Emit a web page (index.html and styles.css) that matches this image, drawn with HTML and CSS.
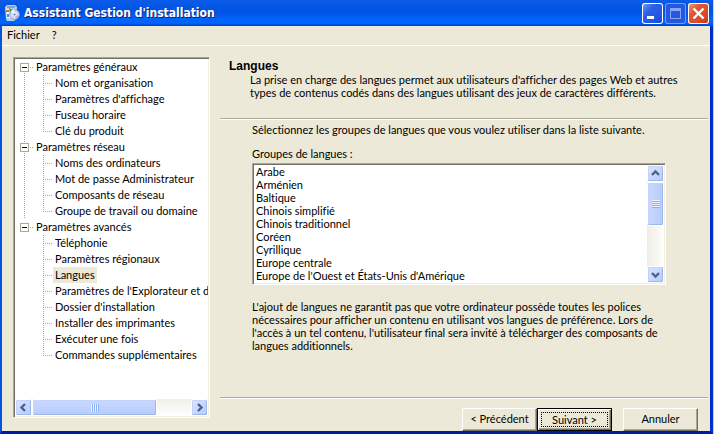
FILE: index.html
```html
<!DOCTYPE html>
<html lang="fr">
<head>
  <meta charset="UTF-8">
  <meta name="viewport" content="width=device-width, initial-scale=1.0">
  <title>Assistant Gestion d'installation</title>
  <link rel="stylesheet" href="styles.css">
</head>
<body>
  <div class="window">
    <header class="titlebar">
      <svg class="app-icon" width="16" height="16" viewBox="0 0 16 16" aria-hidden="true">
        <path d="M1 2l2-2h8l2 2-1 12-2 2H3l-1-2z" fill="#b9d0e6"/>
        <path d="M2 4h10v9H3z" fill="#eef6fb"/>
        <path d="M3 1h8v2H3z" fill="#7fa6d0"/>
        <path d="M5 3l4 2-3 4z" fill="#2c9a55"/>
        <path d="M2 5h3v2H2z" fill="#e0642f"/>
        <path d="M3 9h2v3H3z" fill="#4f8fd8"/>
        <circle cx="10.500" cy="9.500" r="4.800" fill="#d7d9ee" stroke="#8d9cc4"/>
        <path d="M10.500 9.500L7 6l3-1.500z" fill="#fff"/>
        <path d="M10.500 9.500l4 2-2 2.500z" fill="#b7a9dc"/>
        <circle cx="10.500" cy="9.500" r="1.500" fill="#5478c0" stroke="#fff"/>
      </svg>
      <h1>Assistant Gestion d'installation</h1>
      <button class="caption" aria-label="Réduire">
        <svg width="21" height="21" viewBox="0 0 21 21"><path d="M5 13h7v3H5z" fill="#fff"/></svg>
      </button>
      <button class="caption maximize" aria-label="Agrandir" disabled>
        <svg width="21" height="21" viewBox="0 0 21 21"><path d="M5 5h11v11H5zM6 8v7h9V8z" fill="#87a5f5" fill-rule="evenodd"/></svg>
      </button>
      <button class="caption close" aria-label="Fermer">
        <svg width="21" height="21" viewBox="0 0 21 21"><path d="M5.500 5.500l10 10M15.500 5.500l-10 10" stroke="#fff" stroke-width="2.400"/></svg>
      </button>
    </header>

    <nav class="menubar">
      <button>Fichier</button>
      <button>?</button>
    </nav>

    <main class="client">
      <div class="tree-box">
        <ul class="tree">
          <li>
            <div class="group"><button class="toggle" aria-label="Réduire Paramètres généraux"></button><span>Paramètres généraux</span></div>
            <ul>
              <li><a href="#">Nom et organisation</a></li>
              <li><a href="#">Paramètres d'affichage</a></li>
              <li><a href="#">Fuseau horaire</a></li>
              <li><a href="#">Clé du produit</a></li>
            </ul>
          </li>
          <li>
            <div class="group"><button class="toggle" aria-label="Réduire Paramètres réseau"></button><span>Paramètres réseau</span></div>
            <ul>
              <li><a href="#">Noms des ordinateurs</a></li>
              <li><a href="#">Mot de passe Administrateur</a></li>
              <li><a href="#">Composants de réseau</a></li>
              <li><a href="#">Groupe de travail ou domaine</a></li>
            </ul>
          </li>
          <li>
            <div class="group"><button class="toggle" aria-label="Réduire Paramètres avancés"></button><span>Paramètres avancés</span></div>
            <ul>
              <li><a href="#">Téléphonie</a></li>
              <li><a href="#">Paramètres régionaux</a></li>
              <li><a href="#" class="selected">Langues</a></li>
              <li><a href="#">Paramètres de l'Explorateur et de</a></li>
              <li><a href="#">Dossier d'installation</a></li>
              <li><a href="#">Installer des imprimantes</a></li>
              <li><a href="#">Exécuter une fois</a></li>
              <li><a href="#">Commandes supplémentaires</a></li>
            </ul>
          </li>
        </ul>
        <div class="scrollbar horizontal">
          <button class="arrow" aria-label="Défiler à gauche">
            <svg width="9" height="9" viewBox="0 0 9 9"><path d="M6 1L2.500 4.500L6 8" /></svg>
          </button>
          <div class="thumb"></div>
          <button class="arrow" aria-label="Défiler à droite">
            <svg width="9" height="9" viewBox="0 0 9 9"><path d="M3 1l3.500 3.500L3 8" /></svg>
          </button>
        </div>
      </div>

      <section class="page">
        <div class="page-header">
          <h2>Langues</h2>
          <p>La prise en charge des langues permet aux utilisateurs d'afficher des pages Web et autres types de contenus codés dans des langues utilisant des jeux de caractères différents.</p>
        </div>
        <div class="page-body">
          <p>Sélectionnez les groupes de langues que vous voulez utiliser dans la liste suivante.</p>
          <label for="languages">Groupes de langues :</label>
          <div class="list-box">
            <select id="languages" size="9" multiple>
              <option>Arabe</option>
              <option>Arménien</option>
              <option>Baltique</option>
              <option>Chinois simplifié</option>
              <option>Chinois traditionnel</option>
              <option>Coréen</option>
              <option>Cyrillique</option>
              <option>Europe centrale</option>
              <option>Europe de l'Ouest et États-Unis d'Amérique</option>
            </select>
            <div class="scrollbar vertical">
              <button class="arrow" aria-label="Défiler vers le haut">
                <svg width="9" height="9" viewBox="0 0 9 9"><path d="M1 6l3.500-3.500L8 6" /></svg>
              </button>
              <div class="thumb"></div>
              <button class="arrow" aria-label="Défiler vers le bas">
                <svg width="9" height="9" viewBox="0 0 9 9"><path d="M1 3l3.500 3.500L8 3" /></svg>
              </button>
            </div>
          </div>
          <p class="note">L'ajout de langues ne garantit pas que votre ordinateur possède toutes les polices nécessaires pour afficher un contenu en utilisant vos langues de préférence. Lors de l'accès à un tel contenu, l'utilisateur final sera invité à télécharger des composants de langues additionnels.</p>
        </div>
        <footer class="actions">
          <button>&lt; Précédent</button>
          <button class="default"><span>Suivant &gt;</span></button>
          <button class="cancel">Annuler</button>
        </footer>
      </section>
    </main>
  </div>
</body>
</html>
```

FILE: styles.css
```css
* {
  box-sizing: border-box;
}
body {
  margin: 0;
  background: #c9d3f0;
  color: #000;
  font: 11px/13px Lato, "Liberation Sans", Arial, sans-serif;
  font-variant-ligatures: none;
}
h1, h2, p, ul {
  margin: 0;
  padding: 0;
}
ul {
  list-style: none;
}
button {
  padding: 0;
  border: 0;
  background: none;
  color: inherit;
  font: inherit;
}
svg {
  display: block;
}

.window {
  display: flex;
  flex-direction: column;
  height: 100vh;
  margin-right: 1px;
  background: #ece9d8;
  border: solid #0054e3;
  border-width: 0 3px 3px 2px;
  border-right-color: #0030c8;
  border-bottom-color: #001da0;
}

/* title bar */
.titlebar {
  display: flex;
  align-items: center;
  gap: 2px;
  height: 26px;
  margin: 0 -3px 0 -2px;
  padding: 0 4px;
  background: linear-gradient(#0a5be8 0, #0355e4 8px, #0054e3 12px, #0062fb 19px, #0066ff 23px, #003fc4 26px);
}
.titlebar h1 {
  flex: 1;
  margin-left: 2px;
  color: #fff;
  font: bold 12px/16px "DejaVu Sans Condensed", "DejaVu Sans", sans-serif;
  text-shadow: 1px 1px #0a1f80;
}
.caption {
  width: 21px;
  height: 21px;
  border-radius: 3px;
  background: linear-gradient(135deg, #7ba0f5, #2c5fe6 35%, #2257e4 70%, #1846c8);
  box-shadow: inset 0 0 0 1px #fff;
}
.maximize {
  background: #2458e2;
  box-shadow: inset 0 0 0 1px #7b9cf2;
}
.close {
  background: linear-gradient(135deg, #f0a087, #e35430 35%, #dc4a22 70%, #b83310);
  box-shadow: inset 0 0 0 1px #fff;
}

/* menu */
.menubar {
  display: flex;
  gap: 12px;
  height: 20px;
  padding: 0 0 2px 5px;
  border-bottom: 1px solid #fff;
}

.client {
  flex: 1;
  display: grid;
  grid-template-columns: 197px 1fr;
  gap: 10px;
  min-height: 0;
  padding: 11px 2px 0 11px;
}

/* tree */
.tree-box {
  display: flex;
  flex-direction: column;
  margin-bottom: 13px;
  background: #fff;
  border: 1px solid;
  border-color: #aca899 #fff #fff #aca899;
  box-shadow: inset 1px 1px #716f64, inset -1px -1px #f1efe2;
  padding: 1px;
  overflow: hidden;
}
.tree {
  flex: 1;
  padding-left: 5px;
  line-height: 16px;
  white-space: nowrap;
  overflow: hidden;
}
.tree > li {
  background: linear-gradient(#aca899 1px, transparent 1px) 4px 8px / 1px 2px repeat-y;
}
.tree > li:first-child .group {
  background: linear-gradient(#fff, #fff) 0 0 / 9px 8px no-repeat;
}
.tree > li:last-child {
  background: none;
}
.group {
  display: flex;
  align-items: center;
  height: 16px;
}
.group::before {
  order: 1;
  content: "";
  width: 5px;
  height: 1px;
  margin-right: 2px;
  background: linear-gradient(90deg, transparent 1px, #aca899 1px) 0 0 / 2px 1px;
}
.group span {
  order: 2;
}
.toggle {
  width: 9px;
  height: 9px;
  border: 1px solid #aca899;
  background: linear-gradient(#000, #000) center / 5px 1px no-repeat #fff;
}
.tree ul {
  padding-left: 23px;
}
.tree ul li {
  display: flex;
  height: 16px;
}
.tree ul li::before {
  content: "";
  flex: none;
  width: 9px;
  height: 16px;
  margin-right: 1px;
  background:
    linear-gradient(#aca899 1px, transparent 1px) 0 0 / 1px 2px repeat-y,
    linear-gradient(90deg, #aca899 1px, transparent 1px) 0 8px / 2px 1px repeat-x;
}
.tree ul li:last-child::before {
  height: 9px;
}
.tree a {
  padding: 0 2px;
  color: inherit;
  text-decoration: none;
}
.tree a.selected {
  background: #ece9d8;
}

/* scrollbars */
.scrollbar {
  display: flex;
  flex: none;
}
.scrollbar.horizontal {
  height: 17px;
  background: linear-gradient(#f0efe8, #fff);
}
.scrollbar.vertical {
  flex-direction: column;
  width: 17px;
  background: linear-gradient(90deg, #eeede5, #fefefb);
}
.arrow, .thumb {
  display: flex;
  align-items: center;
  justify-content: center;
  border: 1px solid #fff;
  border-radius: 2px;
  background: linear-gradient(135deg, #dbe5fe, #b6cbfb);
  box-shadow: inset -1px -1px #9cb6ee, inset 1px 1px #c4d3fb;
}
.arrow {
  flex: none;
  width: 17px;
  height: 17px;
}
.arrow svg {
  fill: none;
  stroke: #4d6185;
  stroke-width: 2.400;
}
.horizontal .thumb {
  width: 65%;
  margin-right: auto;
  background: linear-gradient(#cad9fe, #b7ccfb);
}
.vertical .thumb {
  height: 44px;
  margin-bottom: auto;
  background: linear-gradient(90deg, #cad9fe, #b7ccfb);
}
.thumb::before {
  content: "";
  width: 8px;
  height: 8px;
}
.horizontal .thumb::before {
  background: repeating-linear-gradient(90deg, #eef4fe 0 1px, #8cb0f8 1px 2px);
}
.vertical .thumb::before {
  background: repeating-linear-gradient(#eef4fe 0 1px, #8cb0f8 1px 2px);
}

/* wizard page */
.page {
  display: flex;
  flex-direction: column;
}
.page-header {
  height: 63px;
  padding: 2px 24px 0 9px;
  border-bottom: 1px solid #fff;
  box-shadow: inset 0 -1px #aca899;
}
.page-header h2 {
  font: bold 12px/14px "Liberation Sans", Arial, sans-serif;
}
.page-header p {
  padding-left: 21px;
}
.page-body {
  flex: 1;
  padding: 3px 42px 0 32px;
  border-bottom: 1px solid #fff;
  box-shadow: inset 0 -1px #aca899;
}
.page-body label {
  display: block;
  margin: 11px 0 3px;
}
.list-box {
  display: flex;
  height: 122px;
  background: #fff;
  border: 1px solid;
  border-color: #aca899 #fff #fff #aca899;
  box-shadow: inset 1px 1px #716f64, inset -1px -1px #f1efe2;
  padding: 1px;
}
.list-box select {
  flex: 1;
  min-width: 0;
  padding: 0;
  border: 0;
  outline: 0;
  background: none;
  color: inherit;
  font: inherit;
  overflow: hidden;
  scrollbar-width: none;
}
.list-box option {
  height: 13px;
  min-height: 13px;
  padding: 0 2px;
  line-height: 13px;
}
.note {
  margin-top: 15px;
}

.actions {
  display: flex;
  padding: 9px 10px 0 0;
  justify-content: flex-end;
}
.actions button {
  width: 75px;
  height: 23px;
  padding-bottom: 2px;
  border: 1px solid;
  border-color: #fff #716f64 #716f64 #fff;
  box-shadow: inset -1px -1px #aca899;
  background: #ece9d8;
}
.actions .default {
  padding: 2px;
  border-color: #000;
  box-shadow: inset 1px 1px #fff, inset -1px -1px #716f64, inset -2px -2px #aca899;
}
.default span {
  display: block;
  margin: 1px;
  border: 1px dotted #000;
}
.actions .cancel {
  margin-left: 11px;
}
```
